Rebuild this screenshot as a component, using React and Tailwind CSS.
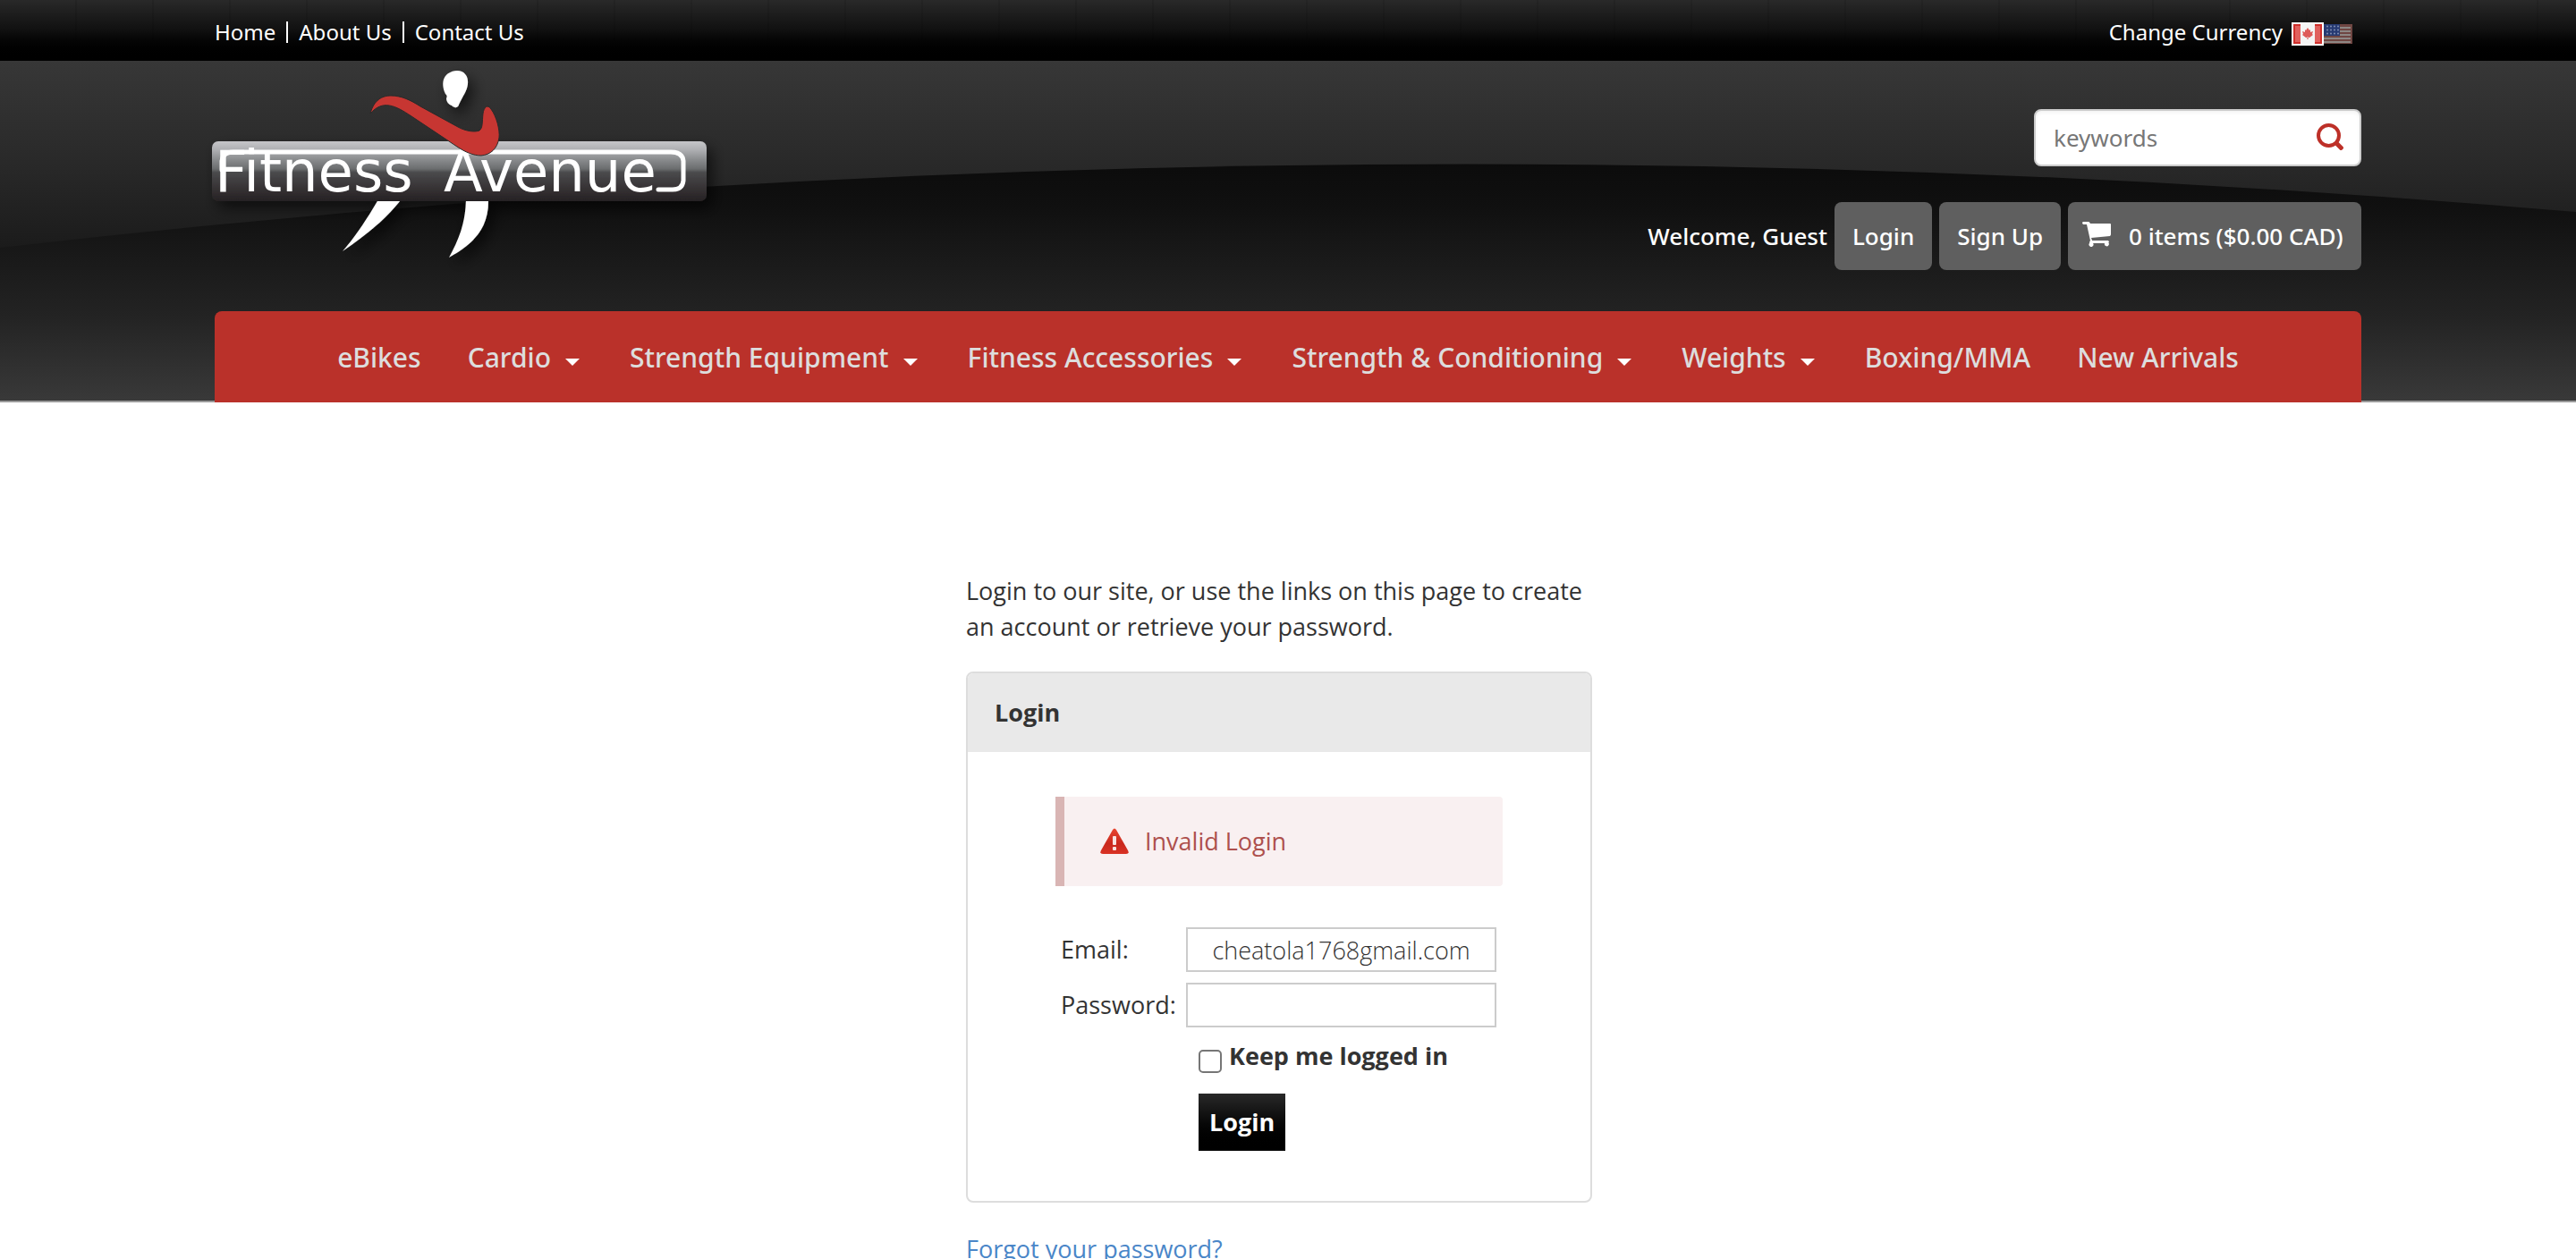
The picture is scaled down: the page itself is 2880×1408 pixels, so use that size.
import React from "react";

const NAV = [
  { label: "eBikes" },
  { label: "Cardio", menu: true },
  { label: "Strength Equipment", menu: true },
  { label: "Fitness Accessories", menu: true },
  { label: "Strength & Conditioning", menu: true },
  { label: "Weights", menu: true },
  { label: "Boxing/MMA" },
  { label: "New Arrivals" },
];

function CanadaFlag() {
  return (
    <svg viewBox="0 0 32 22" className="h-[22px] w-8" aria-hidden="true">
      <rect width="32" height="22" fill="#f4f4f4" />
      <rect width="8" height="22" fill="#cf2f2b" />
      <rect x="24" width="8" height="22" fill="#cf2f2b" />
      <rect x="2" y="2" width="6" height="18" fill="#e0605d" />
      <rect x="24" y="2" width="6" height="18" fill="#e0605d" />
      <path
        d="M16 4l2 3 1-1v3l3-1-1 3 1 1-4 3h-4l-4-3 1-1-1-3 3 1V6l1 1z"
        fill="#de5a58"
      />
      <path d="M15 14h2v3h-2z" fill="#e59a98" />
    </svg>
  );
}

function UsaFlag() {
  return (
    <svg viewBox="0 0 32 22" className="h-[22px] w-8" aria-hidden="true">
      <rect width="32" height="22" fill="#6f4642" />
      {[3, 7, 11, 15, 19].map((y) => (
        <rect key={y} y={y} width="30" height="2" fill="#8d8784" />
      ))}
      <rect width="18" height="13" fill="#263a72" />
      {[3, 7, 11].map((y) =>
        [4, 8, 12, 16].map((x) => (
          <circle key={x + "-" + y} cx={x} cy={y - 0.5} r="1" fill="#8290b4" />
        ))
      )}
    </svg>
  );
}

function Logo() {
  return (
    <svg
      viewBox="0 0 580 240"
      className="h-[240px] w-[580px]"
      role="img"
      aria-label="Fitness Avenue"
    >
      <defs>
        <linearGradient id="plate" x1="0" y1="0" x2="0" y2="1">
          <stop offset="0" stopColor="#c6c6c9" />
          <stop offset="0.15" stopColor="#adaeb1" />
          <stop offset="0.3" stopColor="#8b8d8f" />
          <stop offset="0.46" stopColor="#6b6d6f" />
          <stop offset="0.52" stopColor="#4a4a4c" />
          <stop offset="0.8" stopColor="#353133" />
          <stop offset="1" stopColor="#262224" />
        </linearGradient>
        <filter id="drop" x="-20%" y="-20%" width="150%" height="160%">
          <feDropShadow dx="6" dy="8" stdDeviation="8" floodColor="#000" floodOpacity="0.6" />
        </filter>
      </defs>
      <g filter="url(#drop)">
        <path
          d="M192 155h25C202 174 182 191 153 211C166 196 177 180 192 155z"
          fill="#fff"
        />
        <path
          d="M291 155h25C316 184 301 202 272 218C283 198 290 180 291 155z"
          fill="#fff"
        />
        <rect x="7" y="88" width="553" height="67" rx="7" fill="url(#plate)" />
        <path
          d="M281 9c8 0 13 6 12 15c-1 8-5 12-10 23c-1 4-5 4-8 1c-3-1-6-4-6-8c1-2 1-3-1-5c-6-13-2-25 13-26z"
          fill="#fff"
        />
      </g>
      <path
        d="M18 120V110Q19 100 31 100H520Q533 100 534 110V132Q533 142 522 142H506"
        fill="none"
        stroke="#fff"
        strokeWidth="5"
        strokeLinecap="round"
      />
      <g
        className="font-['DejaVu_Sans',sans-serif] text-[64px] font-normal"
        fill="#fff"
      >
        <text x="10" y="144">Fitness</text>
        <text x="266" y="144">Avenue</text>
      </g>
      <path
        d="M184 57C188 42 197 37 207 37C219 37 229 42 240 49L282 72C291 77 301 78 306 76C310 73 309 66 310 57C311 50 315 46 319 52C325 60 329 75 328 84C326 97 318 103 308 104C299 104 290 100 281 94L230 60C212 48 198 41 184 57z"
        fill="#c73632"
        stroke="#2a2a2a"
        strokeWidth="1"
      />
    </svg>
  );
}

function HeaderBackdrop() {
  return (
    <svg
      viewBox="0 0 2880 382"
      preserveAspectRatio="none"
      className="absolute inset-0 h-full w-full"
      aria-hidden="true"
    >
      <defs>
        <linearGradient id="upper" x1="0" y1="0" x2="0" y2="1">
          <stop offset="0" stopColor="#373737" />
          <stop offset="0.3" stopColor="#292929" />
          <stop offset="0.55" stopColor="#1b1b1b" />
          <stop offset="1" stopColor="#1b1b1b" />
        </linearGradient>
        <linearGradient id="lower" gradientUnits="userSpaceOnUse" x1="0" y1="110" x2="0" y2="382">
          <stop offset="0" stopColor="#0b0b0b" />
          <stop offset="0.2" stopColor="#101010" />
          <stop offset="0.38" stopColor="#181818" />
          <stop offset="0.65" stopColor="#232323" />
          <stop offset="1" stopColor="#393939" />
        </linearGradient>
      </defs>
      <rect width="2880" height="382" fill="url(#upper)" />
      <path d="M0 210Q1440 45 2880 170V382H0z" fill="url(#lower)" />
    </svg>
  );
}

function WarningIcon() {
  return (
    <svg viewBox="0 0 32 30" className="h-[30px] w-8" aria-hidden="true">
      <defs>
        <linearGradient id="warn" x1="0" y1="0" x2="0" y2="1">
          <stop offset="0" stopColor="#e8452f" />
          <stop offset="0.6" stopColor="#c9281d" />
          <stop offset="1" stopColor="#d93225" />
        </linearGradient>
      </defs>
      <path
        d="M14 2q2-3 4 0l13 23q2 4-2 4H3q-4 0-2-4z"
        fill="url(#warn)"
      />
      <rect x="14" y="9" width="4" height="10" rx="1" fill="#f8e4e1" />
      <rect x="14" y="21" width="4" height="4" rx="1" fill="#f8e4e1" />
    </svg>
  );
}

function SearchIcon() {
  return (
    <svg viewBox="0 0 30 30" className="size-[30px]" fill="none" stroke="#bd3028" aria-hidden="true">
      <circle cx="13.500" cy="13.500" r="11.500" strokeWidth="4" />
      <path d="M21 21l8 8" strokeWidth="5" />
    </svg>
  );
}

function CartIcon() {
  return (
    <svg viewBox="0 0 32 28" className="mb-1 h-7 w-8" fill="#fff" aria-hidden="true">
      <path d="M1 0h6q1 0 2 2h22q1 0 1 1v11q0 1-1 2L10 18l1 3h18q1 1 1 2h-1a2.500 2.500 0 1 1-4 1H12a2.500 2.500 0 1 1-4 0q0-2 1-3L5 3H1Q-1 1 1 0z" />
    </svg>
  );
}

export default function App() {
  return (
    <div className="min-h-screen bg-white font-['Open_Sans',sans-serif] text-[27px] leading-10 text-[#333]">
      <div className="bg-linear-to-b from-[#292929] via-[#101010] to-black">
        <div className="bg-[repeating-linear-gradient(90deg,transparent_0px,transparent_84px,rgba(0,0,0,0.2)_85px,transparent_86px)]">
          <div className="mx-auto flex h-[68px] max-w-[2400px] items-center justify-between pt-1 font-['Noto_Sans',sans-serif] text-2xl text-white">
            <nav aria-label="Site" className="flex items-center gap-3">
              <a href="#home">Home</a>
              <span className="h-6 w-0.5 bg-white" />
              <a href="#about">About Us</a>
              <span className="h-6 w-0.5 bg-white" />
              <a href="#contact">Contact Us</a>
            </nav>
            <div className="mr-2.5 flex items-center">
              <span className="mr-2.5">Change Currency</span>
              <div className="mt-1 flex items-center">
                <button type="button" aria-label="Canadian dollars" className="border-2 border-white">
                  <CanadaFlag />
                </button>
                <button type="button" aria-label="US dollars">
                  <UsaFlag />
                </button>
              </div>
            </div>
          </div>
        </div>
      </div>

      <header className="relative border-b-2 border-[#999]">
        <HeaderBackdrop />
        <div className="relative mx-auto -mb-0.5 max-w-[2400px] font-['Noto_Sans',sans-serif] text-[26px] font-medium text-white">
          <div className="flex h-[280px] items-start justify-between">
            <a href="#home" className="-ml-2.5 mt-0.5">
              <Logo />
            </a>
            <div className="flex flex-col items-end gap-10 pt-[54px]">
              <form className="flex h-16 w-[366px] items-center rounded-lg border-2 border-[#ccc] bg-white pr-[18px] pl-5 inset-shadow-sm">
                <input
                  type="search"
                  aria-label="Search keywords"
                  placeholder="keywords"
                  className="min-w-0 flex-1 font-normal text-[#555] outline-none placeholder:text-[#777]"
                />
                <button type="button" aria-label="Search" className="pb-0.5">
                  <SearchIcon />
                </button>
              </form>
              <div className="flex items-center gap-2">
                <span>Welcome, Guest</span>
                <a href="#login" className="flex h-[76px] items-center rounded-lg bg-[#5f5f5f] px-5">Login</a>
                <a href="#signup" className="flex h-[76px] items-center rounded-lg bg-[#5f5f5f] px-5">Sign Up</a>
                <a href="#cart" className="flex h-[76px] w-[328px] items-center rounded-lg bg-[#5f5f5f] pl-4">
                  <CartIcon />
                  <span className="ml-5 whitespace-nowrap">0 items ($0.00 CAD)</span>
                </a>
              </div>
            </div>
          </div>
          <nav
            aria-label="Products"
            className="flex h-[102px] items-center justify-center gap-[52px] rounded-t-lg bg-[#ba312a] pt-0.5 text-3xl text-[#ddd]"
          >
            {NAV.map((item) => (
              <a key={item.label} href="#products" className="flex items-center whitespace-nowrap">
                {item.label}
                {item.menu && (
                  <svg viewBox="0 0 16 8" className="mt-2.5 mr-1 ml-4 h-2 w-4" fill="#fff" aria-hidden="true">
                    <path d="M0 0h16L8 8z" />
                  </svg>
                )}
              </a>
            ))}
          </nav>
        </div>
      </header>

      <main className="mx-auto w-[720px] pt-[191px] pr-5">
        <p>
          Login to our site, or use the links on this page to create
          <br />
          an account or retrieve your password.
        </p>
        <section className="mt-[30px] rounded-lg border-2 border-[#ddd]">
          <h1 className="rounded-t-md bg-[#e9e9e9] px-[30px] py-6 font-bold">Login</h1>
          <div className="px-[98px] pt-[50px] pb-14">
            <div
              role="alert"
              className="flex h-[100px] items-center gap-[18px] rounded-r-sm border-l-[10px] border-[#d9b5b4] bg-[#f9f0f1] pl-10 text-[#ae504d]"
            >
              <WarningIcon />
              Invalid Login
            </div>
            <form className="mt-[46px] grid grid-cols-[140px_1fr] items-center gap-y-3 pr-[7px] pl-1.5">
              <label htmlFor="email">Email:</label>
              <input
                id="email"
                type="text"
                defaultValue="cheatola1768gmail.com"
                className="h-[50px] min-w-0 border-2 border-[#ccc] text-center font-light text-[#333] outline-none"
              />
              <label htmlFor="password">Password:</label>
              <input
                id="password"
                type="password"
                className="h-[50px] min-w-0 border-2 border-[#ccc] px-6 outline-none"
              />
              <div className="col-start-2 pl-3.5">
                <div className="flex items-center gap-2">
                  <input
                    id="keep"
                    type="checkbox"
                    className="mt-3 size-[26px] appearance-none rounded-[5px] border-2 border-[#767676] bg-white checked:bg-[#337ab7]"
                  />
                  <label htmlFor="keep" className="font-bold">
                    Keep me logged in
                  </label>
                </div>
                <button
                  type="button"
                  className="mt-[22px] h-16 bg-linear-to-b from-[#292929] to-black px-3 font-bold text-white"
                >
                  Login
                </button>
              </div>
            </form>
          </div>
        </section>
        <p className="mt-8">
          <a href="#forgot" className="text-[#4a86c8]">
            Forgot your password?
          </a>
        </p>
      </main>
    </div>
  );
}
